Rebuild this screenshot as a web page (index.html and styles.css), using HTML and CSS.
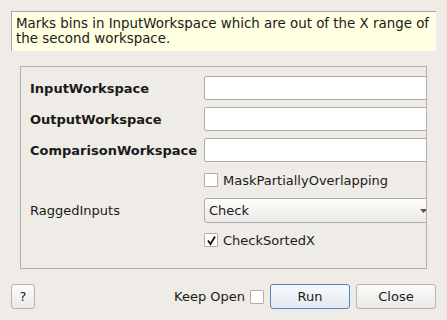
FILE: index.html
```html
<!DOCTYPE html>
<html>
<head>
<meta charset="utf-8">
<link rel="stylesheet" href="styles.css">
</head>
<body>
<div class="dialog">
  <div class="desc">Marks bins in InputWorkspace which are out of the X range of the second workspace.</div>
  <div class="group">
    <div class="grid">
      <div class="label bold">InputWorkspace</div>
      <div class="field"><div class="input"></div></div>
      <div class="label bold">OutputWorkspace</div>
      <div class="field"><div class="input"></div></div>
      <div class="label bold">ComparisonWorkspace</div>
      <div class="field"><div class="input"></div></div>
      <div class="label"></div>
      <div class="field check-row"><span class="box"></span><span class="check-text">MaskPartiallyOverlapping</span></div>
      <div class="label">RaggedInputs</div>
      <div class="field"><div class="combo"><span>Check</span><svg class="arrow" width="7" height="4" viewBox="0 0 7 4"><path d="M0 0H7L3.5 4Z" fill="#555"/></svg></div></div>
      <div class="label"></div>
      <div class="field check-row"><span class="box"><svg width="11" height="11" viewBox="0 0 11 11"><path d="M2 5.5L4.5 9L9 1.5" fill="none" stroke="#111" stroke-width="1.8"/></svg></span><span class="check-text">CheckSortedX</span></div>
    </div>
  </div>
  <div class="buttons">
    <button class="btn help">?</button>
    <span class="keep">Keep Open</span>
    <span class="box keep-box"></span>
    <button class="btn run">Run</button>
    <button class="btn close">Close</button>
  </div>
</div>
</body>
</html>
```
FILE: styles.css
```css
html, body {
  margin: 0;
  padding: 0;
  width: 447px;
  height: 320px;
  overflow: hidden;
  background: #efebe7;
}
.dialog {
  font-family: "DejaVu Sans", sans-serif;
  font-size: 13px;
  color: #1a1a1a;
  padding-top: 11px;
}
.desc {
  margin: 0 11px 0 11px;
  height: 40px;
  box-sizing: border-box;
  background: #ffffe1;
  border-left: 1px solid #a8a8a8;
  border-top: 1px solid #a8a8a8;
  padding: 4px 4px 0 4px;
  font-size: 13.4px;
  line-height: 15px;
}
.group {
  margin: 15px 20px 0 20px;
  width: 407px;
  height: 203px;
  box-sizing: border-box;
  border: 1px solid #b3afaa;
  overflow: hidden;
  padding: 9px 0 0 9px;
}
.grid {
  display: grid;
  grid-template-columns: 174px 240px;
  grid-template-rows: 24px 24px 24px 22px 24px 22px;
  row-gap: 7px;
}
.label {
  display: flex;
  align-items: center;
  white-space: nowrap;
}
.bold { font-weight: bold; }
.field {
  display: flex;
  align-items: center;
}
.input {
  width: 100%;
  height: 24px;
  box-sizing: border-box;
  background: #fff;
  border: 1px solid #b0aca7;
  border-radius: 2px;
}
.combo {
  width: 100%;
  height: 25px;
  box-sizing: border-box;
  background: linear-gradient(#fdfdfd, #ebe9e7);
  border: 1px solid #b0aca7;
  border-radius: 3px;
  display: flex;
  align-items: center;
  padding-left: 4px;
  position: relative;
}
.arrow {
  position: absolute;
  left: 215px;
  top: 10px;
}
.check-row { gap: 5px; }
.box {
  display: inline-flex;
  align-items: center;
  justify-content: center;
  width: 14px;
  height: 14px;
  box-sizing: border-box;
  background: #fff;
  border: 1px solid #b0aca7;
  border-radius: 1px;
}
.buttons {
  display: flex;
  align-items: center;
  margin-top: 15px;
  padding: 0 11px;
}
.btn {
  font-family: "DejaVu Sans", sans-serif;
  font-size: 13px;
  color: #1a1a1a;
  height: 25px;
  box-sizing: border-box;
  background: linear-gradient(#fbfbfb, #ebe9e6);
  border: 1px solid #b7b3ae;
  border-radius: 3px;
  padding: 0;
}
.help { width: 24px; }
.keep { margin-left: auto; margin-right: 5px; }
.keep-box { margin-right: 6px; }
.run {
  width: 80px;
  border-color: #4f86bf;
  background: linear-gradient(#f6f9fc, #e3e9ef);
  margin-right: 6px;
}
.close { width: 80px; }
```
